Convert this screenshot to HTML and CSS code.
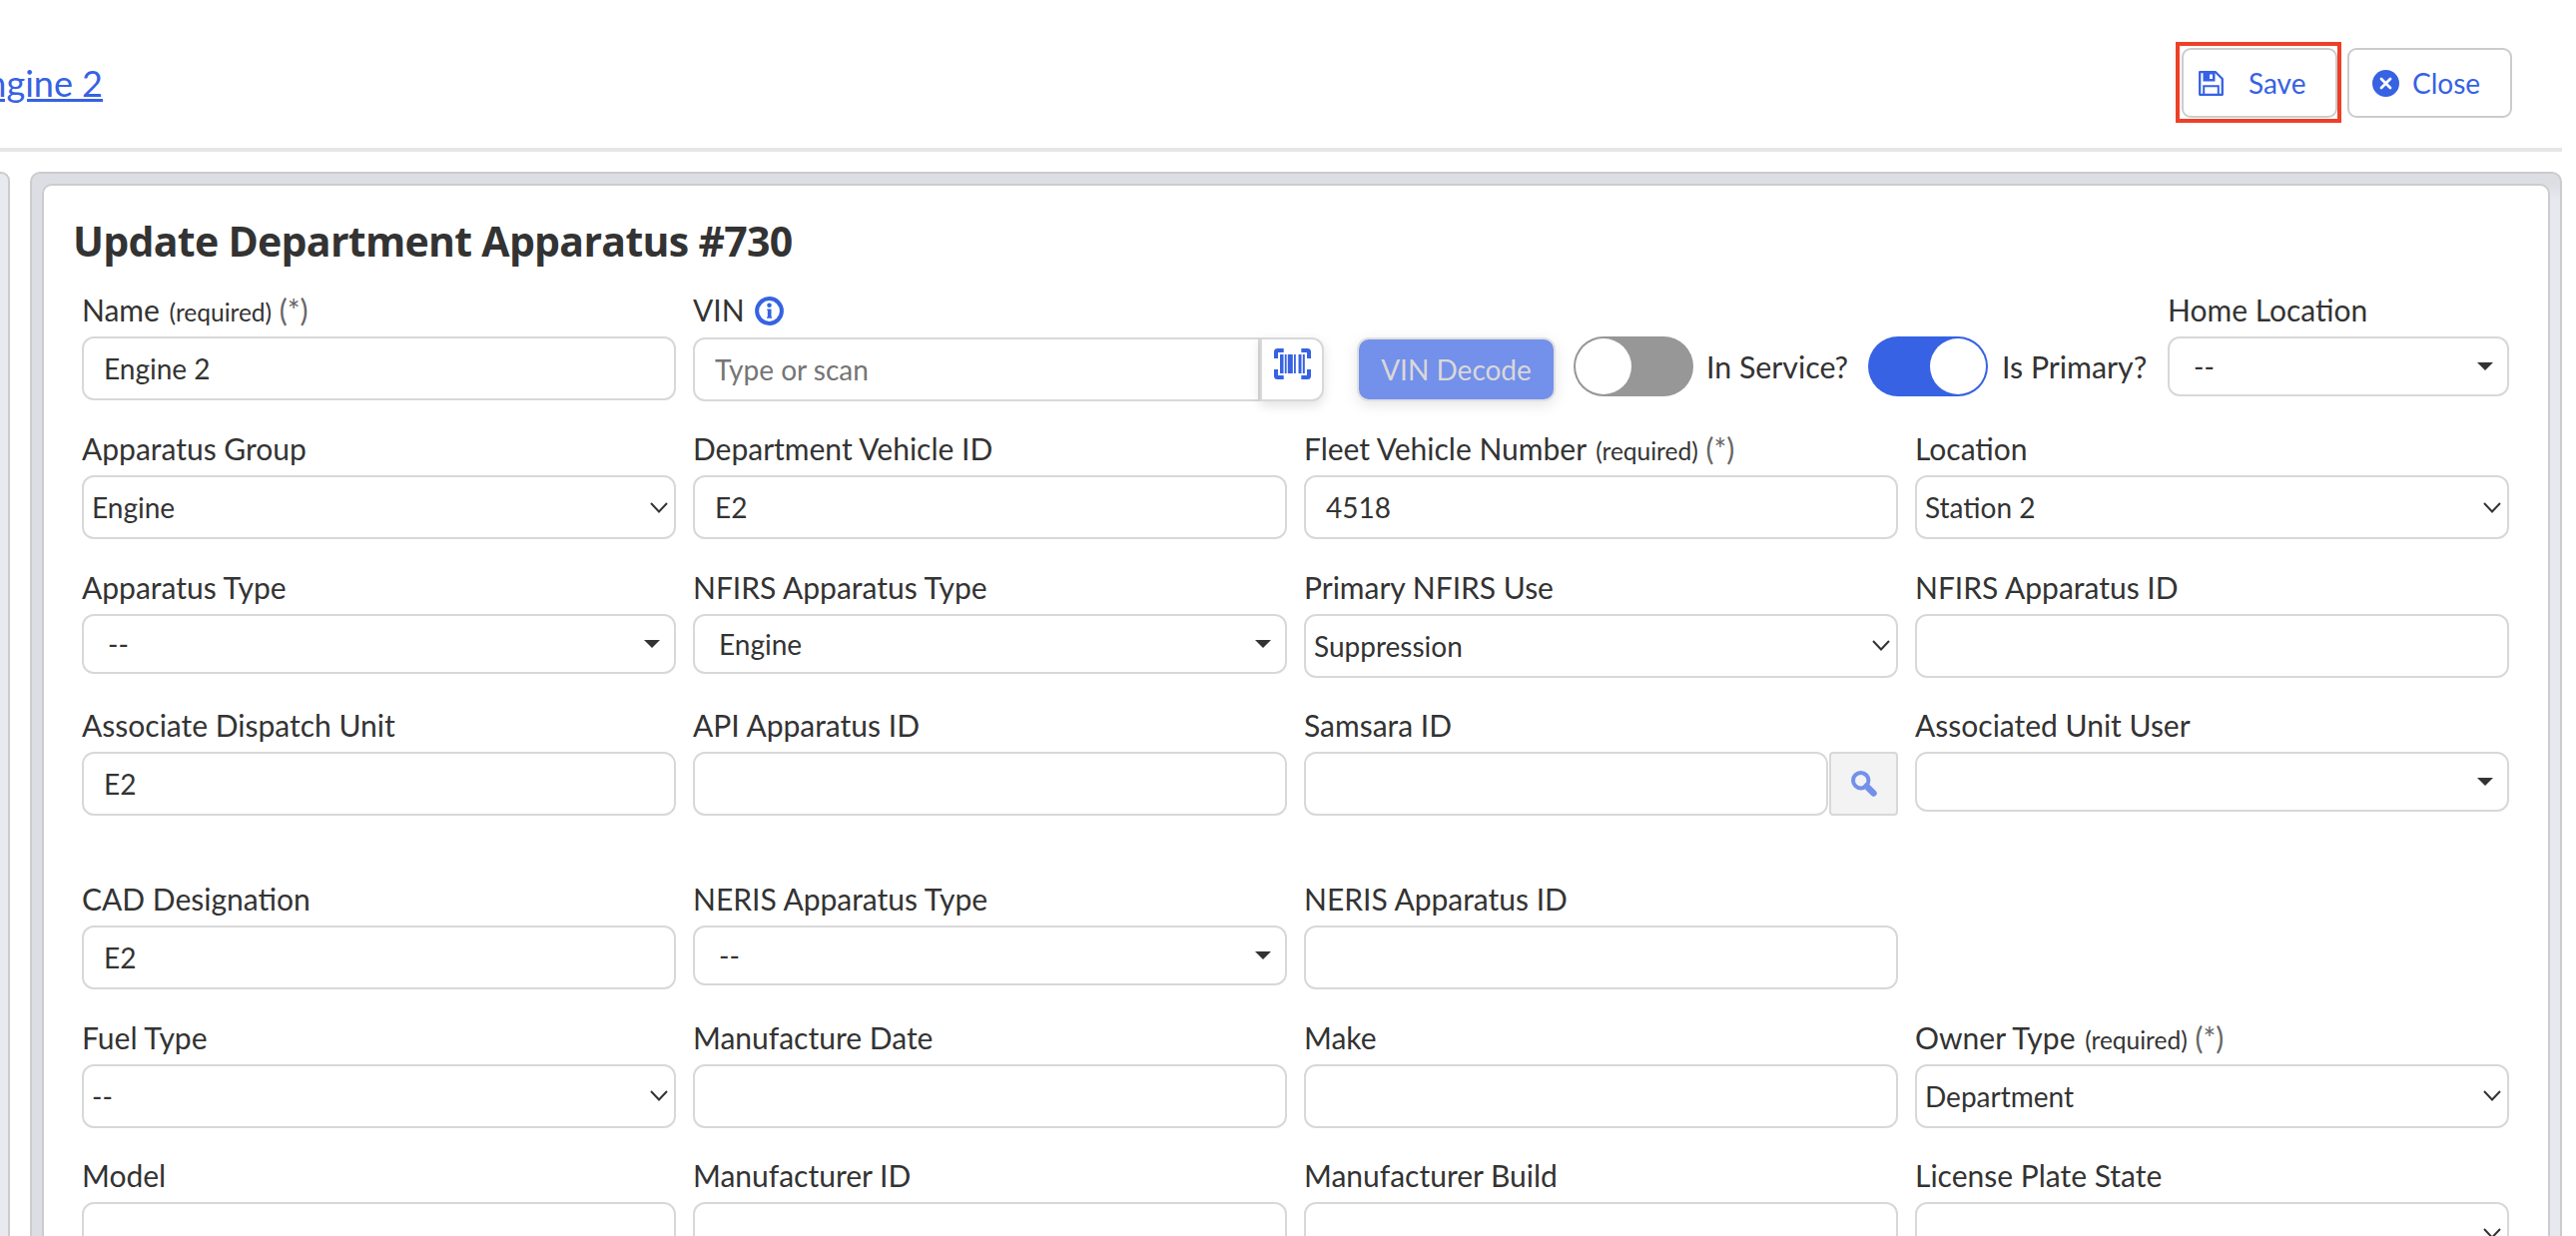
FILE: index.html
```html
<!DOCTYPE html>
<html lang="en">
<head>
    <meta charset="UTF-8">
    <meta name="viewport" content="width=device-width, initial-scale=1.0">
    <title>Update Department Apparatus</title>
    <link rel="stylesheet" href="styles.css">
</head>
<body>
    <header class="topbar">
        <a class="crumb" href="#">Engine 2</a>
        <div class="actions">
            <div class="highlight">
                <button class="btn btn-save">
                    <svg class="icon-save" width="25" height="25" viewBox="0 0 25 25"><path d="M1.2 1.2H17L23.8 8V23.8H1.2Z" fill="none" stroke="#3662e3" stroke-width="2.3" stroke-linejoin="round"/><path d="M4.5 1H16.5V10.5H4.5Z" fill="#3662e3"/><path d="M11 3.5H14V8H11Z" fill="#fff"/><path d="M5.2 24V15.2H19.8V24" fill="none" stroke="#3662e3" stroke-width="2"/></svg>
                    <span>Save</span>
                </button>
            </div>
            <button class="btn btn-close">
                <svg width="27" height="27" viewBox="0 0 27 27"><circle cx="13.5" cy="13.5" r="13.5" fill="#3662e3"/><path d="M9 9L18 18M18 9L9 18" stroke="#fff" stroke-width="2.8" stroke-linecap="round"/></svg>
                <span>Close</span>
            </button>
        </div>
    </header>

    <main class="content">
        <div class="side-panel"></div>
        <div class="panel">
            <form class="card">
                <h1>Update Department Apparatus #730</h1>

                <div class="row row-top">
                    <div class="field name-field">
                        <label>Name <small>(required)</small> <i>(*)</i></label>
                        <input type="text" value="Engine 2">
                    </div>
                    <div class="field vin-field">
                        <label>VIN <svg class="icon-info" width="29" height="29" viewBox="0 0 29 29"><circle cx="14.5" cy="14.5" r="12.4" fill="none" stroke="#3662e3" stroke-width="4"/><circle cx="14.5" cy="8.8" r="2.3" fill="#3662e3"/><path d="M12.3 12.4H16.5V20.4H17.2V21.8H12V20.4H12.8V14H12.3Z" fill="#3662e3"/></svg></label>
                        <div class="input-group">
                            <input type="text" placeholder="Type or scan">
                            <button type="button" class="scan">
                                <svg width="37" height="31" viewBox="0 0 37 31"><path d="M2 10V3.5Q2 2 3.5 2H9.7M27.3 2H33.5Q35 2 35 3.5V10M35 21V27.5Q35 29 33.5 29H27.3M9.7 29H3.5Q2 29 2 27.5V21" fill="none" stroke="#3662e3" stroke-width="4"/><path d="M6 6H9.5V25H6ZM10.8 6H12.6V25H10.8ZM13.8 6H18.8V25H13.8ZM20 6H21.8V25H20ZM24.5 6H27.5V25H24.5ZM28.8 6H30.8V25H28.8Z" fill="#3662e3"/></svg>
                            </button>
                        </div>
                    </div>
                    <button type="button" class="decode">VIN Decode</button>
                    <div class="toggle-field">
                        <span class="toggle"></span>
                        <span>In Service?</span>
                    </div>
                    <div class="toggle-field primary">
                        <span class="toggle on"></span>
                        <span>Is Primary?</span>
                    </div>
                    <div class="field home-field">
                        <label>Home Location</label>
                        <div class="dropdown">--</div>
                    </div>
                </div>

                <div class="row">
                    <div class="field">
                        <label>Apparatus Group</label>
                        <div class="select">Engine<svg class="chevron" viewBox="0 0 18 11"><path d="M1 1L9 9.5L17 1"/></svg></div>
                    </div>
                    <div class="field">
                        <label>Department Vehicle ID</label>
                        <input type="text" value="E2">
                    </div>
                    <div class="field">
                        <label>Fleet Vehicle Number <small>(required)</small> <i>(*)</i></label>
                        <input type="text" value="4518">
                    </div>
                    <div class="field">
                        <label>Location</label>
                        <div class="select">Station 2<svg class="chevron" viewBox="0 0 18 11"><path d="M1 1L9 9.5L17 1"/></svg></div>
                    </div>
                </div>

                <div class="row">
                    <div class="field">
                        <label>Apparatus Type</label>
                        <div class="dropdown">--</div>
                    </div>
                    <div class="field">
                        <label>NFIRS Apparatus Type</label>
                        <div class="dropdown">Engine</div>
                    </div>
                    <div class="field">
                        <label>Primary NFIRS Use</label>
                        <div class="select">Suppression<svg class="chevron" viewBox="0 0 18 11"><path d="M1 1L9 9.5L17 1"/></svg></div>
                    </div>
                    <div class="field">
                        <label>NFIRS Apparatus ID</label>
                        <input type="text">
                    </div>
                </div>

                <div class="row row-tall">
                    <div class="field">
                        <label>Associate Dispatch Unit</label>
                        <input type="text" value="E2">
                    </div>
                    <div class="field">
                        <label>API Apparatus ID</label>
                        <input type="text">
                    </div>
                    <div class="field">
                        <label>Samsara ID</label>
                        <div class="search-group">
                            <input type="text">
                            <button type="button" class="search">
                                <svg width="26" height="26" viewBox="0 0 26 26"><circle cx="9.7" cy="9.7" r="7.7" fill="none" stroke="#7390ea" stroke-width="4"/><path d="M15.5 15.5L22.5 22.5" stroke="#7390ea" stroke-width="6.4" stroke-linecap="round"/></svg>
                            </button>
                        </div>
                    </div>
                    <div class="field">
                        <label>Associated Unit User</label>
                        <div class="dropdown"></div>
                    </div>
                </div>

                <div class="row">
                    <div class="field">
                        <label>CAD Designation</label>
                        <input type="text" value="E2">
                    </div>
                    <div class="field">
                        <label>NERIS Apparatus Type</label>
                        <div class="dropdown">--</div>
                    </div>
                    <div class="field">
                        <label>NERIS Apparatus ID</label>
                        <input type="text">
                    </div>
                </div>

                <div class="row">
                    <div class="field">
                        <label>Fuel Type</label>
                        <div class="select">--<svg class="chevron" viewBox="0 0 18 11"><path d="M1 1L9 9.5L17 1"/></svg></div>
                    </div>
                    <div class="field">
                        <label>Manufacture Date</label>
                        <input type="text">
                    </div>
                    <div class="field">
                        <label>Make</label>
                        <input type="text">
                    </div>
                    <div class="field">
                        <label>Owner Type <small>(required)</small> <i>(*)</i></label>
                        <div class="select">Department<svg class="chevron" viewBox="0 0 18 11"><path d="M1 1L9 9.5L17 1"/></svg></div>
                    </div>
                </div>

                <div class="row">
                    <div class="field">
                        <label>Model</label>
                        <input type="text">
                    </div>
                    <div class="field">
                        <label>Manufacturer ID</label>
                        <input type="text">
                    </div>
                    <div class="field">
                        <label>Manufacturer Build</label>
                        <input type="text">
                    </div>
                    <div class="field">
                        <label>License Plate State</label>
                        <div class="select"><svg class="chevron" viewBox="0 0 18 11"><path d="M1 1L9 9.5L17 1"/></svg></div>
                    </div>
                </div>
            </form>
        </div>
    </main>
</body>
</html>
```
FILE: styles.css
```css
* {
    box-sizing: border-box;
}
html {
    overflow: hidden;
}
body {
    margin: 0;
    height: 1238px;
    overflow: hidden;
    background: #fff;
    color: #333;
    font-family: Lato, "Liberation Sans", sans-serif;
    font-size: 28px;
}
input, button {
    font-family: inherit;
    font-size: 28px;
    color: #333;
}
.topbar {
    width: 2566px;
    height: 152px;
    border-bottom: 4px solid #e6e6e6;
    display: flex;
    justify-content: space-between;
    align-items: flex-start;
    padding: 42px 50px 0 0;
}
.crumb {
    width: 103px;
    margin-top: 18px;
    display: flex;
    justify-content: flex-end;
    white-space: nowrap;
    font-size: 36px;
    line-height: 46px;
    color: #3662e3;
    text-decoration: underline;
    text-decoration-thickness: 3px;
}
.actions {
    display: flex;
    gap: 6px;
}
.highlight {
    width: 166px;
    height: 81px;
    padding: 2px 0 0 2px;
    border: 4px solid #ee4027;
}
.btn {
    height: 70px;
    display: flex;
    align-items: center;
    background: #fff;
    border: 2px solid #ccc;
    border-radius: 9px;
    color: #3662e3;
}
.btn-save {
    width: 156px;
    gap: 25px;
    padding: 0 0 0 15px;
}
.btn-close {
    width: 165px;
    margin-top: 6px;
    gap: 13px;
    padding: 0 0 0 23px;
}
.content {
    display: flex;
    padding-top: 20px;
    height: 1086px;
    overflow: hidden;
}
.side-panel {
    width: 10px;
    margin-right: 20px;
    background: #e9eaef;
    border: 2px solid #ccc;
    border-left: none;
    border-bottom: none;
    border-radius: 0 9px 0 0;
}
.panel {
    width: 2536px;
    padding: 10px 10px 0;
    border: 2px solid #ccc;
    border-bottom: none;
    border-radius: 10px 10px 0 0;
    background: linear-gradient(to bottom, #dddee3 10px, transparent 26px), linear-gradient(90deg, #dddee3, #e8e9ee);
}
.card {
    height: 100%;
    padding: 27px 38px 0;
    background: #fff;
    border: 2px solid #ccc;
    border-bottom: none;
    border-radius: 10px 10px 0 0;
    overflow: hidden;
}
h1 {
    margin: 0 0 22px -9px;
    font-family: "Open Sans", sans-serif;
    font-size: 41px;
    line-height: 56px;
    font-weight: 700;
    letter-spacing: -0.7px;
    white-space: nowrap;
}
.row {
    display: grid;
    grid-template-columns: repeat(4, 595px);
    column-gap: 17px;
    height: 138.4px;
}
.row-top {
    display: flex;
    column-gap: 0;
    height: 139.4px;
}
.row-tall {
    height: 174px;
}
.field {
    display: flex;
    flex-direction: column;
    min-width: 0;
}
label {
    height: 46px;
    font-size: 30px;
    line-height: 38px;
    white-space: nowrap;
}
label small {
    font-size: 24.5px;
    margin-left: 2px;
}
label i {
    font-style: normal;
    color: #666;
}
input {
    width: 100%;
    height: 64px;
    padding: 0 20px;
    background: #fff;
    border: 2px solid #d8d8d8;
    border-radius: 12px;
}
input::placeholder {
    color: #757575;
}
.select, .dropdown {
    display: flex;
    align-items: center;
    justify-content: space-between;
    border: 2px solid #d8d8d8;
    border-radius: 12px;
    background: #fff;
}
.select {
    height: 64px;
    padding: 0 6px 0 8px;
}
.chevron {
    width: 18px;
    height: 11px;
    margin-left: auto;
    fill: none;
    stroke: #333;
    stroke-width: 2;
}
.dropdown {
    height: 60px;
    padding: 0 14px 0 24px;
}
.dropdown::after {
    content: "";
    margin-left: auto;
    border: 8px solid transparent;
    border-top-color: #333;
    border-bottom: none;
}
.name-field {
    width: 595px;
    margin-right: 17px;
}
.vin-field {
    width: 632px;
    margin-right: 33px;
}
.icon-info {
    vertical-align: -4px;
    margin-left: 3px;
}
.input-group {
    display: flex;
    margin-top: 1px;
}
.input-group input {
    flex: 1;
    border-radius: 12px 0 0 12px;
}
.scan {
    width: 64px;
    height: 64px;
    padding: 0 0 11px;
    display: flex;
    align-items: center;
    justify-content: center;
    background: #fff;
    border: 2px solid #d8d8d8;
    border-radius: 0 12px 12px 0;
    box-shadow: 0 4px 12px rgba(0, 0, 0, 0.12);
}
.decode {
    width: 199px;
    height: 64px;
    margin: 47px 18px 0 0;
    padding: 0;
    background: #7390ea;
    border: 2px solid #e0e0e0;
    border-radius: 12px;
    color: #d8d8d8;
    box-shadow: 0 4px 14px rgba(0, 0, 0, 0.1);
}
.toggle-field {
    display: flex;
    align-items: center;
    gap: 13px;
    width: 295px;
    height: 60px;
    margin-top: 46px;
    font-size: 30.3px;
    white-space: nowrap;
}
.primary {
    width: 300px;
    gap: 14px;
}
.toggle {
    display: flex;
    width: 120px;
    height: 60px;
    padding: 2px;
    border-radius: 30px;
    background: #979797;
}
.toggle::before {
    content: "";
    width: 56px;
    height: 56px;
    border-radius: 50%;
    background: #fff;
}
.toggle.on {
    justify-content: flex-end;
    background: #3662e3;
}
.home-field {
    width: 342px;
}
.search-group {
    display: flex;
    gap: 1px;
}
.search-group input {
    flex: 1;
}
.search {
    width: 69px;
    height: 64px;
    display: flex;
    align-items: center;
    justify-content: center;
    background: #f3f3f3;
    border: 2px solid #d8d8d8;
    border-radius: 4px;
}
```
